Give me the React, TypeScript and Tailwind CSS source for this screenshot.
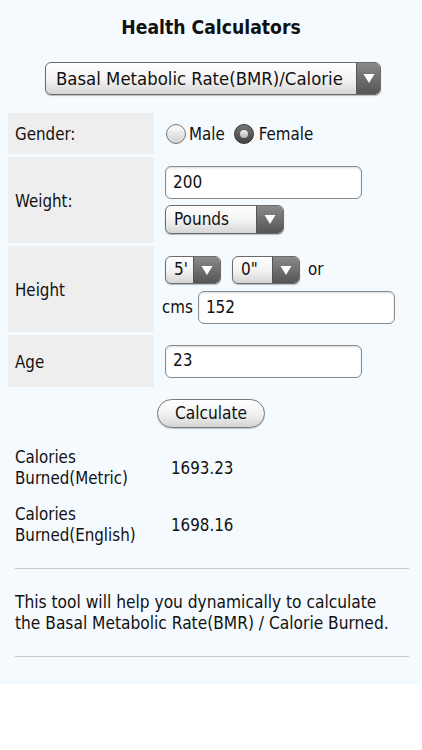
import React from "react";

const font = { fontFamily: '"DejaVu Sans Condensed", "DejaVu Sans", sans-serif' };

function Arrow({ w }: { w: string }) {
  return (
    <div
      className={`flex h-full ${w} items-center justify-center border-l border-[#555] bg-gradient-to-b from-[#8a8a8a] to-[#555]`}
    >
      <svg width="12" height="11" viewBox="0 0 12 11">
        <path d="M0.5 1 L11.5 1 L6 10 Z" fill="#ffffff" />
      </svg>
    </div>
  );
}

function Select({ label, className, arrowW, text }: { label: string; className: string; arrowW: string; text: string }) {
  return (
    <div
      className={`flex items-stretch overflow-hidden rounded-[6px] border border-[#6b6b6b] bg-gradient-to-b from-white via-[#f4f4f4] to-[#d6d6d6] shadow-[0_1px_1px_rgba(0,0,0,0.25)] ${className}`}
    >
      <span className={`flex flex-1 items-center pl-[8px] text-[#111] ${text}`}>{label}</span>
      <Arrow w={arrowW} />
    </div>
  );
}

function Input({ value, className }: { value: string; className: string }) {
  return (
    <div
      className={`flex items-center rounded-[6px] border border-[#8a8a8a] bg-white pl-[7px] text-[17px] text-[#111] shadow-[inset_0_1px_2px_rgba(0,0,0,0.15)] ${className}`}
    >
      {value}
    </div>
  );
}

function Radio({ checked }: { checked?: boolean }) {
  if (checked) {
    return (
      <span className="flex h-[20px] w-[20px] items-center justify-center rounded-full border border-[#333] bg-gradient-to-b from-[#777] to-[#444]">
        <span className="h-[8px] w-[8px] rounded-full bg-gradient-to-b from-[#eee] to-[#bbb]" />
      </span>
    );
  }
  return (
    <span className="h-[20px] w-[20px] rounded-full border border-[#777] bg-gradient-to-b from-white to-[#cfcfcf]" />
  );
}

export default function App() {
  return (
    <div className="min-h-[750px] bg-white font-stretch-condensed" style={font}>
      <div className="bg-[#f5faff] pb-[27px] text-[#111]">
        <h1 className="pt-[16px] text-center text-[19.2px] font-bold leading-[24px]">Health Calculators</h1>

        <div className="mt-[22px] flex justify-center">
          <Select
            label="Basal Metabolic Rate(BMR)/Calorie"
            className="ml-[4px] h-[33px] w-[336px]"
            arrowW="w-[24px]"
            text="text-[18.4px] pl-[10px]"
          />
        </div>

        <div className="mt-[18px] grid grid-cols-[146px_1fr] gap-y-[3px] pl-[8px] text-[16.8px]">
          <div className="flex h-[41px] items-center bg-[#eeeeee] pl-[7px] pt-[3px]">Gender:</div>
          <div className="flex items-center pl-[12px]">
            <Radio />
            <span className="ml-[3px] pt-[2px]">Male</span>
            <span className="ml-[9px]" />
            <Radio checked />
            <span className="ml-[5px] pt-[2px]">Female</span>
          </div>

          <div className="flex h-[86px] items-center bg-[#eeeeee] pl-[7px] pt-[3px]">Weight:</div>
          <div className="flex flex-col pl-[11px] pt-[9px]">
            <Input value="200" className="h-[33px] w-[197px]" />
            <Select label="Pounds" className="mt-[6px] h-[29px] w-[119px]" arrowW="w-[27px]" text="text-[17px]" />
          </div>

          <div className="flex h-[86px] items-center bg-[#eeeeee] pl-[7px] pt-[3px]">Height</div>
          <div className="flex flex-col pl-[8px] pt-[10px]">
            <div className="flex items-center pl-[3px]">
              <Select label="5'" className="h-[28px] w-[56px]" arrowW="w-[27px]" text="text-[17px]" />
              <Select label={'0"'} className="ml-[11px] h-[28px] w-[68px]" arrowW="w-[27px]" text="text-[17px]" />
              <span className="ml-[8px]">or</span>
            </div>
            <div className="mt-[7px] flex items-center">
              <span className="mr-[5px]">cms</span>
              <Input value="152" className="h-[33px] w-[197px]" />
            </div>
          </div>

          <div className="flex h-[52px] items-center bg-[#eeeeee] pl-[7px] pt-[3px]">Age</div>
          <div className="flex items-center pl-[11px]">
            <Input value="23" className="h-[33px] w-[197px]" />
          </div>
        </div>

        <div className="mt-[12px] flex justify-center">
          <div className="flex h-[29px] w-[108px] items-center justify-center rounded-full border border-[#777] bg-gradient-to-b from-white via-[#f2f2f2] to-[#d4d4d4] text-[17.2px] shadow-[0_1px_1px_rgba(0,0,0,0.2)]">
            Calculate
          </div>
        </div>

        <div className="mt-[19px] flex flex-col gap-[15px] pl-[15px] pr-[13px] text-[16.8px] leading-[21px]">
          <div className="flex items-center">
            <div className="w-[156px]">
              Calories
              <br />
              Burned(Metric)
            </div>
            <div>1693.23</div>
          </div>
          <div className="flex items-center">
            <div className="w-[156px]">
              Calories
              <br />
              Burned(English)
            </div>
            <div>1698.16</div>
          </div>
        </div>

        <div className="mx-[15px] mr-[13px] mt-[22px] border-t border-[#c8c8c8]" />
        <p className="mt-[23px] pl-[15px] pr-[22px] text-[17.2px] leading-[21px]">
          This tool will help you dynamically to calculate the Basal Metabolic Rate(BMR) / Calorie Burned.
        </p>
        <div className="mx-[15px] mr-[13px] mt-[22px] border-t border-[#c8c8c8]" />
      </div>
    </div>
  );
}
